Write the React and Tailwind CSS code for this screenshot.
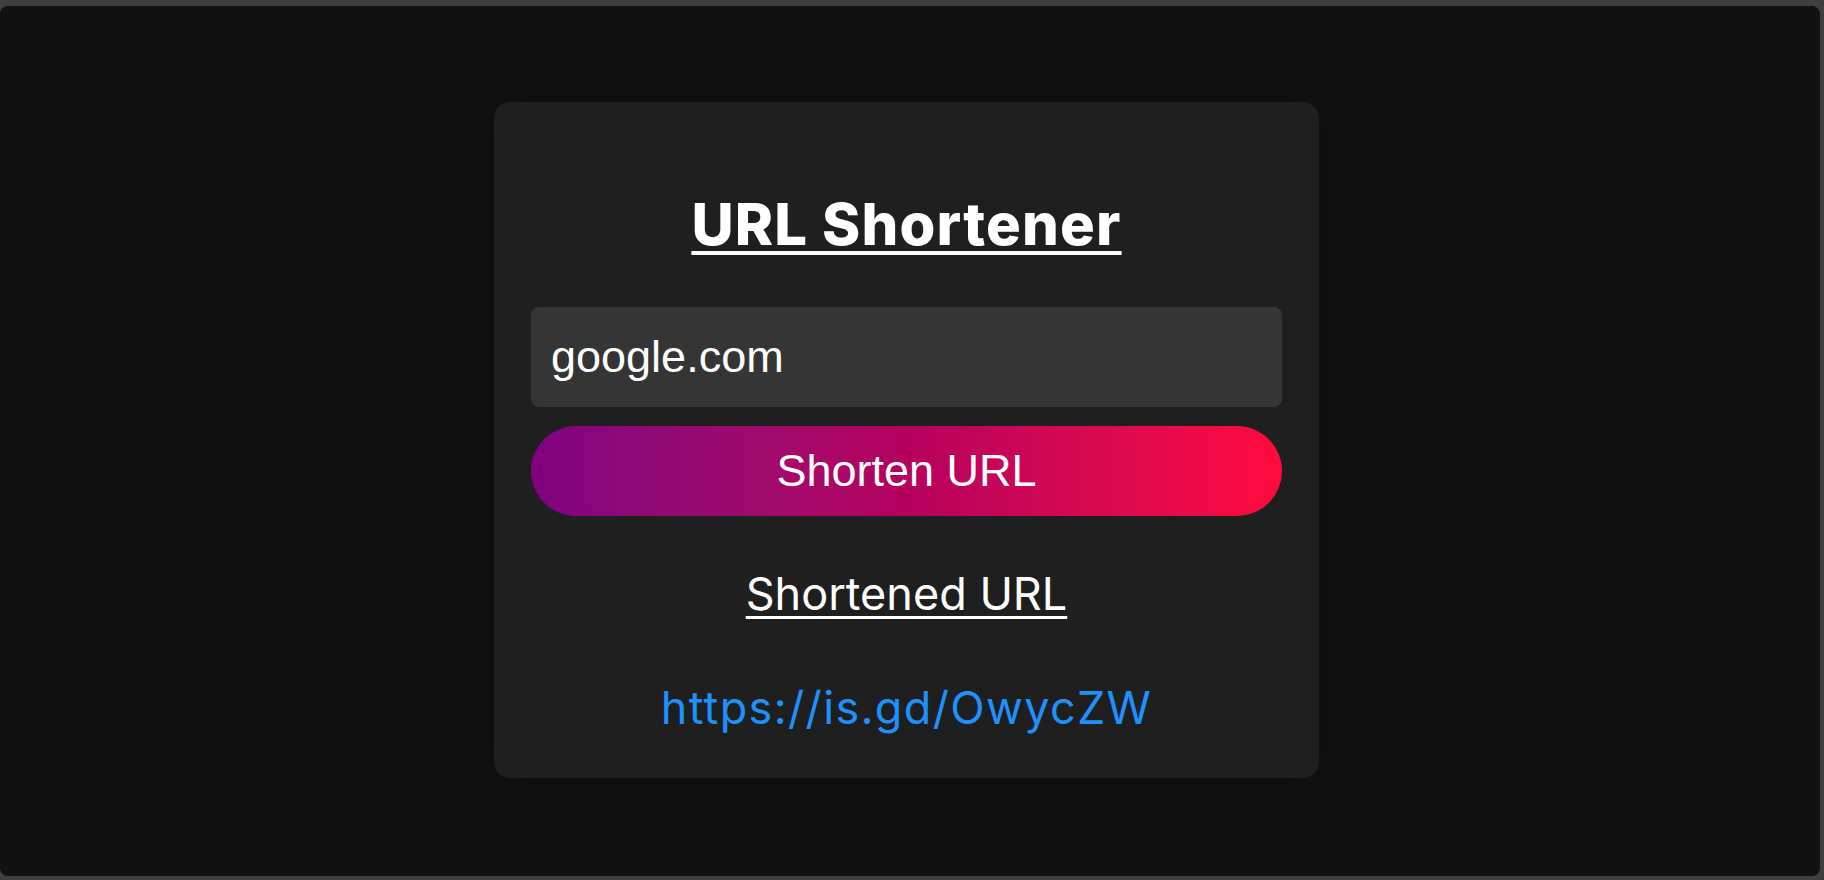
import React, { useState } from 'react';

export default function App() {
  const [url, setUrl] = useState('google.com');
  const shortUrl = 'https://is.gd/OwycZW';

  return (
    <div className="h-[880px] w-full bg-[#3f3f3f] pt-[6px] pr-[4px] pb-[4px]">
      <div className="h-full w-full rounded-lg bg-[#121212] flex justify-center items-start pt-[96px]">
        <div className="mr-[7px] w-[825px] rounded-2xl bg-[#1f1f1f] px-[37px] pt-[93px] pb-[48px] flex flex-col items-center shadow-[0_0_40px_rgba(0,0,0,0.45)]">
          <h1 className="font-['Inter',sans-serif] text-[58px] leading-none font-extrabold text-white underline decoration-[4px] underline-offset-[6px] tracking-[0.02em]">
            URL Shortener
          </h1>

          <input
            value={url}
            onChange={(e) => setUrl(e.target.value)}
            className="mt-[54px] w-full h-[100px] rounded-lg bg-[#353535] pl-[20px] pr-4 font-['Liberation_Sans',Arial,sans-serif] text-[45px] text-white outline-none"
          />

          <button className="mt-[19px] w-full h-[90px] rounded-full bg-gradient-to-r from-[#800080] via-[#b5005e] to-[#ff0a3c] font-['Liberation_Sans',Arial,sans-serif] text-[45px] text-white">
            Shorten URL
          </button>

          <h2 className="mt-[55px] font-['Inter',sans-serif] text-[45px] leading-none font-normal text-white underline decoration-[3px] underline-offset-[6px]">
            Shortened URL
          </h2>

          <a href="#" className="mt-[69px] font-['Inter',sans-serif] text-[45px] leading-none text-[#1e90ff] tracking-[0.03em]">
            {shortUrl}
          </a>
        </div>
      </div>
    </div>
  );
}
